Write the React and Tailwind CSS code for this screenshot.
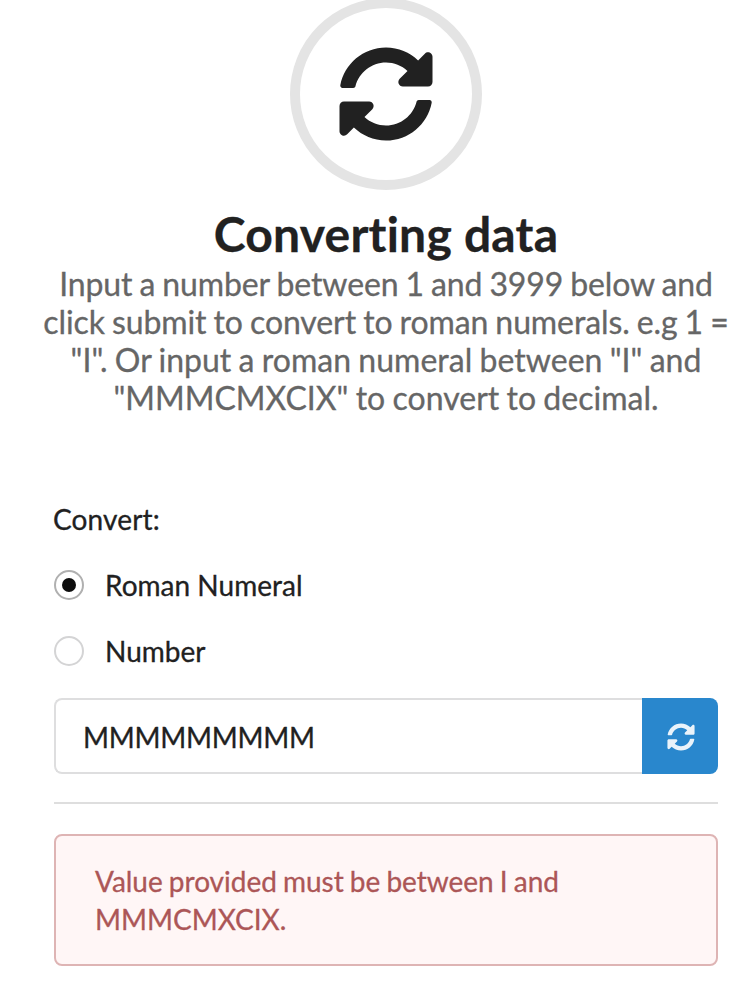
import { FaSyncAlt } from "react-icons/fa";

function Radio({ label, checked }) {
  return (
    <div className="flex h-[34px] items-center">
      <span className={`flex size-[30px] items-center justify-center rounded-full border-2 bg-white ${checked ? "border-[#b0b0b0]" : "border-[#d4d4d5]"}`}>
        {checked && <span className="size-[14px] rounded-full bg-[#0d0d0d]" />}
      </span>
      <span className="ml-[21px] tracking-[0.02px]">{label}</span>
    </div>
  );
}

export default function App() {
  return (
    <div className="h-[986px] w-[736px] overflow-hidden bg-white font-['Lato',sans-serif] text-[28px] leading-[40px] text-[#212121] [font-variant-ligatures:none] [-webkit-text-stroke:0.3px_currentColor]">
      <header className="ml-[36px] flex w-[700px] flex-col items-center text-center">
        <div className="-mt-[2px] flex size-[192px] items-center justify-center rounded-full border-[10px] border-[#e4e4e4]">
          <FaSyncAlt className="size-[96px]" stroke="none" />
        </div>
        <h1 className="mt-[14px] text-[48px] font-bold leading-[60px] tracking-[0.24px]">Converting data</h1>
        <p className="mt-px flex flex-col items-center whitespace-nowrap text-[32px] leading-[38px] text-[#666]">
          <span className="tracking-[-0.12px] [word-spacing:-1px]">Input a number between 1 and 3999 below and</span>
          <span className="tracking-[-0.1px] [word-spacing:-1px]">click submit to convert to roman numerals. e.g 1 =</span>
          <span className="tracking-[0.03px] [word-spacing:-1px]">"I". Or input a roman numeral between "I" and</span>
          <span className="tracking-[0.02px] [word-spacing:-1px]">"MMMCMXCIX" to convert to decimal.</span>
        </p>
      </header>
      <main className="ml-[54px] mt-[82px] w-[664px]">
        <p className="-ml-px tracking-[0.15px]">Convert:</p>
        <div className="mt-[29px] flex flex-col gap-[32px]">
          <Radio label="Roman Numeral" checked />
          <Radio label="Number" />
        </div>
        <div className="mt-[30px] flex h-[76px]">
          <div className="flex flex-1 items-center rounded-l-[8px] border-2 border-r-0 border-[#dededf] pl-[27px] pt-[2px] tracking-[-0.25px]">MMMMMMMMM</div>
          <button className="flex w-[76px] items-center justify-center rounded-r-[8px] bg-[#2987cd] pl-px pt-[2px] text-white">
            <FaSyncAlt className="size-[28px] opacity-90" stroke="none" />
          </button>
        </div>
        <hr className="mt-[28px] border-t-2 border-[#dedede]" />
        <div className="mt-[30px] h-[132px] rounded-[8px] border-2 border-[#deb4b4] bg-[#fff6f6] px-[39px] pt-[26px] leading-[38px] text-[#ac5657]">
          <span className="tracking-[-0.02px] [word-spacing:-1px]">Value provided must be between I and</span><br />MMMCMXCIX.
        </div>
      </main>
    </div>
  );
}
